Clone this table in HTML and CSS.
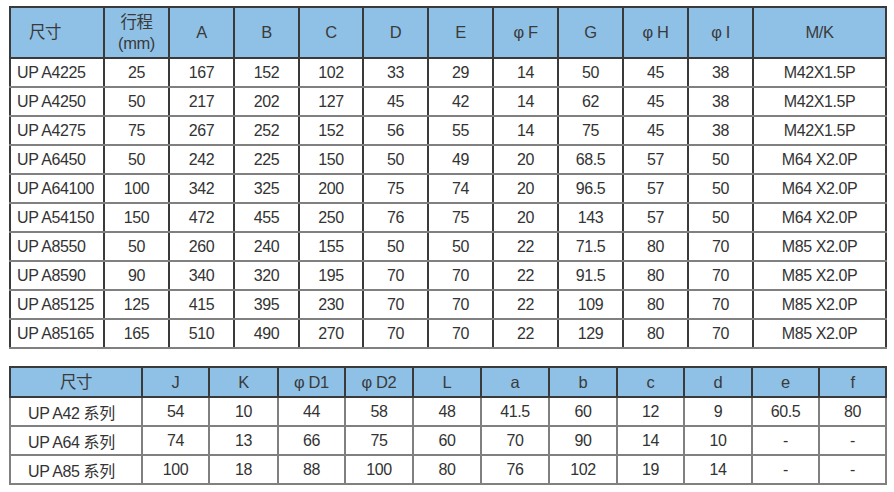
FILE: index.html
```html
<!DOCTYPE html>
<html>
<head>
<meta charset="utf-8">
<link rel="stylesheet" href="styles.css">
</head>
<body>
<div class="page">
<table class="spec spec-main">
<colgroup>
<col style="width:94px"><col style="width:65px"><col style="width:65px"><col style="width:65px"><col style="width:64px"><col style="width:65px"><col style="width:65px"><col style="width:65px"><col style="width:65px"><col style="width:65px"><col style="width:65px"><col style="width:133px">
</colgroup>
<thead>
<tr class="head-tall">
<th class="first">尺寸</th><th>行程<br>(mm)</th><th>A</th><th>B</th><th>C</th><th>D</th><th>E</th><th>φ F</th><th>G</th><th>φ H</th><th>φ I</th><th>M/K</th>
</tr>
</thead>
<tbody>
<tr><td class="first">UP A4225</td><td>25</td><td>167</td><td>152</td><td>102</td><td>33</td><td>29</td><td>14</td><td>50</td><td>45</td><td>38</td><td>M42X1.5P</td></tr>
<tr><td class="first">UP A4250</td><td>50</td><td>217</td><td>202</td><td>127</td><td>45</td><td>42</td><td>14</td><td>62</td><td>45</td><td>38</td><td>M42X1.5P</td></tr>
<tr><td class="first">UP A4275</td><td>75</td><td>267</td><td>252</td><td>152</td><td>56</td><td>55</td><td>14</td><td>75</td><td>45</td><td>38</td><td>M42X1.5P</td></tr>
<tr><td class="first">UP A6450</td><td>50</td><td>242</td><td>225</td><td>150</td><td>50</td><td>49</td><td>20</td><td>68.5</td><td>57</td><td>50</td><td>M64 X2.0P</td></tr>
<tr><td class="first">UP A64100</td><td>100</td><td>342</td><td>325</td><td>200</td><td>75</td><td>74</td><td>20</td><td>96.5</td><td>57</td><td>50</td><td>M64 X2.0P</td></tr>
<tr><td class="first">UP A54150</td><td>150</td><td>472</td><td>455</td><td>250</td><td>76</td><td>75</td><td>20</td><td>143</td><td>57</td><td>50</td><td>M64 X2.0P</td></tr>
<tr><td class="first">UP A8550</td><td>50</td><td>260</td><td>240</td><td>155</td><td>50</td><td>50</td><td>22</td><td>71.5</td><td>80</td><td>70</td><td>M85 X2.0P</td></tr>
<tr><td class="first">UP A8590</td><td>90</td><td>340</td><td>320</td><td>195</td><td>70</td><td>70</td><td>22</td><td>91.5</td><td>80</td><td>70</td><td>M85 X2.0P</td></tr>
<tr><td class="first">UP A85125</td><td>125</td><td>415</td><td>395</td><td>230</td><td>70</td><td>70</td><td>22</td><td>109</td><td>80</td><td>70</td><td>M85 X2.0P</td></tr>
<tr><td class="first">UP A85165</td><td>165</td><td>510</td><td>490</td><td>270</td><td>70</td><td>70</td><td>22</td><td>129</td><td>80</td><td>70</td><td>M85 X2.0P</td></tr>
</tbody>
</table>

<table class="spec spec-series">
<colgroup>
<col style="width:132px"><col style="width:67px"><col style="width:69px"><col style="width:67px"><col style="width:68px"><col style="width:68px"><col style="width:68px"><col style="width:68px"><col style="width:67px"><col style="width:68px"><col style="width:67px"><col style="width:67px">
</colgroup>
<thead>
<tr class="head-short">
<th>尺寸</th><th>J</th><th>K</th><th>φ D1</th><th>φ D2</th><th>L</th><th>a</th><th>b</th><th>c</th><th>d</th><th>e</th><th>f</th>
</tr>
</thead>
<tbody>
<tr><td class="series">UP A42 系列</td><td>54</td><td>10</td><td>44</td><td>58</td><td>48</td><td>41.5</td><td>60</td><td>12</td><td>9</td><td>60.5</td><td>80</td></tr>
<tr><td class="series">UP A64 系列</td><td>74</td><td>13</td><td>66</td><td>75</td><td>60</td><td>70</td><td>90</td><td>14</td><td>10</td><td>-</td><td>-</td></tr>
<tr><td class="series">UP A85 系列</td><td>100</td><td>18</td><td>88</td><td>100</td><td>80</td><td>76</td><td>102</td><td>19</td><td>14</td><td>-</td><td>-</td></tr>
</tbody>
</table>
</div>
</body>
</html>
```

FILE: styles.css
```css
html, body {
  margin: 0;
  padding: 0;
  background: #ffffff;
}

.page {
  padding: 6px 0 0 9px;
  display: flex;
  flex-direction: column;
  gap: 17px;
  align-items: flex-start;
}

.spec {
  border-collapse: collapse;
  table-layout: fixed;
  width: 876px;
  font-family: "Liberation Sans", "Noto Sans CJK SC", sans-serif;
  font-size: 16px;
  color: #333333;
  border: 2px solid #2b2b2b;
  letter-spacing: -0.4px;
}

.spec th,
.spec td {
  border: 2px solid #808080;
  text-align: center;
  vertical-align: middle;
  padding: 0;
  white-space: nowrap;
  overflow: hidden;
}

.spec th {
  background: #8fc1e7;
  font-weight: normal;
  font-size: 16.5px;
  color: #3a3a3a;
  border-color: #3a3a3a;
  line-height: 21px;
}

.spec thead tr {
  border-bottom: 2px solid #2b2b2b;
}

.head-tall {
  height: 51px;
}

.head-short {
  height: 30px;
}

.spec tbody tr {
  height: 29px;
}

.spec-main td {
  border-left-color: #3a3a3a;
  border-right-color: #3a3a3a;
}

.spec th.first {
  text-align: left;
  padding-left: 18px;
}

.spec td.first {
  text-align: left;
  padding-left: 6px;
}

.spec td.series {
  text-align: left;
  padding-left: 17px;
}
```
